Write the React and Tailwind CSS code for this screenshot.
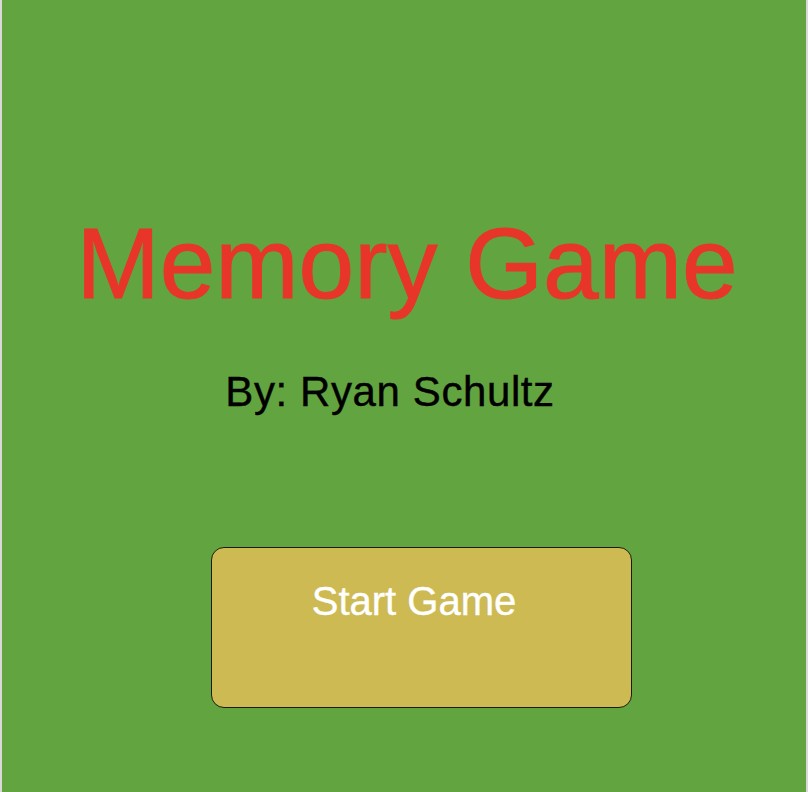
import React from "react";

export default function App() {
  return (
    <div className="min-h-screen w-full bg-[#d9d9d9] px-[2px]" style={{ fontFamily: '"Liberation Sans", Arial, Helvetica, sans-serif' }}>
      <div className="min-h-[792px] bg-[#62a43f] flex flex-col items-start">
        <h1 className="w-full text-center pl-[6px] mt-[213px] text-[100px] leading-[100px] font-normal text-[#e8352a] [-webkit-text-stroke:1px_#e8352a]">
          Memory Game
        </h1>
        <p className="ml-[220px] w-[336px] text-center mt-[59px] text-[42px] leading-[40px] tracking-[0.6px] text-black [-webkit-text-stroke:0.4px_#000]">
          By: Ryan Schultz
        </p>
        <button className="ml-[209px] mt-[135px] w-[421px] h-[161px] border-[1.5px] border-[#1c1c0c] rounded-[13px] bg-[#cdba53] flex justify-center items-start pt-[33px] pr-[15px]">
          <span className="text-[40px] leading-[40px] text-white [-webkit-text-stroke:0.4px_#fff]">Start Game</span>
        </button>
      </div>
    </div>
  );
}
